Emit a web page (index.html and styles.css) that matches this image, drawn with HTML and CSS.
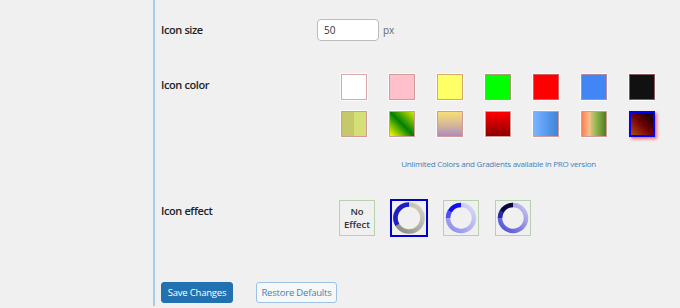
FILE: index.html
```html
<!DOCTYPE html>
<html lang="en">
<head>
    <meta charset="UTF-8">
    <meta name="viewport" content="width=device-width, initial-scale=1.0">
    <title>Icon Settings</title>
    <link rel="stylesheet" href="styles.css">
</head>
<body>
    <div class="wrap">
        <div class="sidebar"></div>
        <div class="main">
            <div class="row rowSize">
                <div class="label">Icon size</div>
                <div class="field">
                    <input type="text" class="sizeInput" value="50">
                    <span class="unit">px</span>
                </div>
            </div>

            <div class="row rowColor">
                <div class="label">Icon color</div>
                <div class="field">
                    <div class="swatches">
                        <div class="swatch sw-white"></div>
                        <div class="swatch sw-pink"></div>
                        <div class="swatch sw-yellow"></div>
                        <div class="swatch sw-lime"></div>
                        <div class="swatch sw-red"></div>
                        <div class="swatch sw-blue"></div>
                        <div class="swatch sw-black"></div>
                        <div class="swatch sw-olive"></div>
                        <div class="swatch sw-greenyellow"></div>
                        <div class="swatch sw-sunset"></div>
                        <div class="swatch sw-darkred"></div>
                        <div class="swatch sw-sky"></div>
                        <div class="swatch sw-orangegreen"></div>
                        <div class="swatch sw-ember selected"></div>
                    </div>
                    <p class="proNote">Unlimited Colors and Gradients available in PRO version</p>
                </div>
            </div>

            <div class="row rowEffect">
                <div class="label">Icon effect</div>
                <div class="field">
                    <div class="effects">
                        <div class="effect noEffect">No<br>Effect</div>
                        <div class="effect selected">
                            <svg width="34" height="34" viewBox="0 0 34 34">
                                <defs>
                                    <linearGradient id="g1" x1="1" y1="0" x2="0" y2="1">
                                        <stop offset="0" stop-color="#d6d6cc"/>
                                        <stop offset="1" stop-color="#85878f"/>
                                    </linearGradient>
                                </defs>
                                <circle cx="17" cy="17" r="13.5" fill="none" stroke="#f3eeb0" stroke-width="5.5"/>
                                <circle cx="17" cy="17" r="13.5" fill="none" stroke="url(#g1)" stroke-width="4.5"/>
                                <path d="M17 3.5 A13.5 13.5 0 0 0 5.3 23.75" fill="none" stroke="#1d1dcc" stroke-width="4.5"/>
                            </svg>
                        </div>
                        <div class="effect">
                            <svg width="34" height="34" viewBox="0 0 34 34" class="blurred">
                                <defs>
                                    <linearGradient id="g2" x1="1" y1="0" x2="0" y2="1">
                                        <stop offset="0" stop-color="#dcdcf4"/>
                                        <stop offset="1" stop-color="#8a8aee"/>
                                    </linearGradient>
                                </defs>
                                <circle cx="17" cy="17" r="13" fill="none" stroke="url(#g2)" stroke-width="4.5"/>
                                <path d="M17 4 A13 13 0 0 0 5.75 10.5" fill="none" stroke="#1010f0" stroke-width="4.5"/>
                                <path d="M5.75 10.5 A13 13 0 0 0 4 17" fill="none" stroke="#5050f0" stroke-width="4.5"/>
                            </svg>
                        </div>
                        <div class="effect">
                            <svg width="34" height="34" viewBox="0 0 34 34">
                                <defs>
                                    <linearGradient id="g3" x1="1" y1="0" x2="0" y2="1">
                                        <stop offset="0" stop-color="#c8c8ee"/>
                                        <stop offset="1" stop-color="#4a4ad6"/>
                                    </linearGradient>
                                </defs>
                                <circle cx="17" cy="17" r="13" fill="none" stroke="url(#g3)" stroke-width="4.5"/>
                                <path d="M17 4 A13 13 0 0 0 5.75 10.5" fill="none" stroke="#0a0a3a" stroke-width="4.5"/>
                                <path d="M5.75 10.5 A13 13 0 0 0 4 17" fill="none" stroke="#2a2aa0" stroke-width="4.5"/>
                            </svg>
                        </div>
                    </div>
                </div>
            </div>

            <div class="actions">
                <button class="btnPrimary">Save Changes</button>
                <button class="btnSecondary">Restore Defaults</button>
            </div>
        </div>
    </div>
</body>
</html>
```

FILE: styles.css
```css
body {
    margin: 0;
    background-color: #f0f0f1;
    font-family: "Open Sans", "Noto Sans", sans-serif;
    color: #1d2327;
    height: 308px;
    overflow: hidden;
}
.wrap {
    display: flex;
}
.sidebar {
    width: 153px;
    flex-shrink: 0;
}
.main {
    border-left: 2px solid #a6cbee;
    padding-left: 6px;
    height: 306px;
    flex: 1;
}
.row {
    display: grid;
    grid-template-columns: 156px 1fr;
}
.label {
    font-size: 11px;
    font-weight: 600;
    line-height: 16px;
    letter-spacing: -0.4px;
}
.rowSize {
    margin-top: 19px;
    align-items: center;
}
.field {
    display: flex;
    flex-direction: column;
}
.rowSize .field {
    flex-direction: row;
    align-items: center;
}
.sizeInput {
    box-sizing: border-box;
    width: 62px;
    height: 22px;
    border: 1px solid #bcbcbc;
    border-radius: 4px;
    background-color: #fff;
    padding: 0 6px;
    font-family: inherit;
    font-size: 10px;
    color: #2c3338;
}
.unit {
    margin-left: 4px;
    font-size: 10px;
    color: #646970;
}
.rowColor {
    margin-top: 33px;
}
.rowColor .label {
    padding-top: 3px;
}
.swatches {
    display: grid;
    grid-template-columns: repeat(7, 26px);
    column-gap: 22px;
    row-gap: 11px;
    padding-left: 24px;
}
.swatch {
    box-sizing: border-box;
    width: 26px;
    height: 26px;
    border: 1px solid #cf9a98;
    box-shadow: 0 0 0 1px rgba(255, 255, 255, 0.7);
}
.sw-white { background-color: #fff; border-color: #d9a8a8; }
.sw-pink { background-color: #ffc0cb; }
.sw-yellow { background-color: #ffff66; border-color: #d6a86e; }
.sw-lime { background-color: #00ff00; border-color: #a6a06e; }
.sw-red { background-color: #ff0000; border-color: #d06060; }
.sw-blue { background-color: #4285f4; border-color: #b08aa8; }
.sw-black { background-color: #111; border-color: #8a5a5a; }
.sw-olive {
    background: linear-gradient(to right, #c5c96c 50%, #d4df78 50%);
}
.sw-greenyellow {
    background: linear-gradient(to top right, #ffff00 0%, #008000 50%, #ffff00 110%);
}
.sw-sunset {
    background: linear-gradient(to bottom, #f7de78, #d8bb94 50%, #ab8ac0);
}
.sw-darkred {
    background: linear-gradient(to bottom, #ff0000, #8b0000);
}
.sw-sky {
    background: linear-gradient(to right, #7ab4ff, #5c9ef0 45%, #3f84d8);
}
.sw-orangegreen {
    background: linear-gradient(to right, #ff7f50, #f5c08a 30%, #9bbb59 55%, #4f7f1f);
}
.sw-ember {
    background: linear-gradient(to bottom left, #000 0%, #700000 50%, #b04a10 100%);
}
.swatch.selected {
    border: 2px solid #0000ff;
    box-shadow: 2px 2px 3px rgba(255, 0, 0, 0.55);
}
.proNote {
    width: 315px;
    margin: 21px 0 0 24px;
    text-align: center;
    font-size: 8px;
    letter-spacing: -0.25px;
    line-height: 12px;
    color: #3f7fba;
    white-space: nowrap;
}
.rowEffect {
    margin-top: 30px;
}
.rowEffect .label {
    padding-top: 3px;
}
.effects {
    display: flex;
    gap: 16px;
    padding-left: 22px;
    align-items: flex-start;
}
.effect {
    box-sizing: border-box;
    width: 36px;
    height: 36px;
    border: 1px solid #b8d0ad;
    display: flex;
    align-items: center;
    justify-content: center;
}
.effect.selected {
    border: 2px solid #0000d0;
    width: 38px;
    height: 38px;
    margin: -1px;
}
.noEffect {
    font-size: 9.5px;
    font-weight: 600;
    line-height: 13px;
    text-align: center;
    color: #333;
}
.blurred {
    filter: blur(0.7px);
}
.actions {
    margin-top: 46px;
    display: flex;
    gap: 23px;
}
button {
    box-sizing: border-box;
    height: 21px;
    font-family: inherit;
    font-size: 9.5px;
    letter-spacing: -0.2px;
    border-radius: 3px;
    padding: 0;
    white-space: nowrap;
    cursor: pointer;
}
.btnPrimary {
    width: 72px;
    background-color: #2271b1;
    border: 1px solid #2271b1;
    color: #fff;
}
.btnSecondary {
    width: 81px;
    background-color: #f6f7f7;
    border: 1px solid #9ec2e6;
    color: #4a7fb0;
}
```
